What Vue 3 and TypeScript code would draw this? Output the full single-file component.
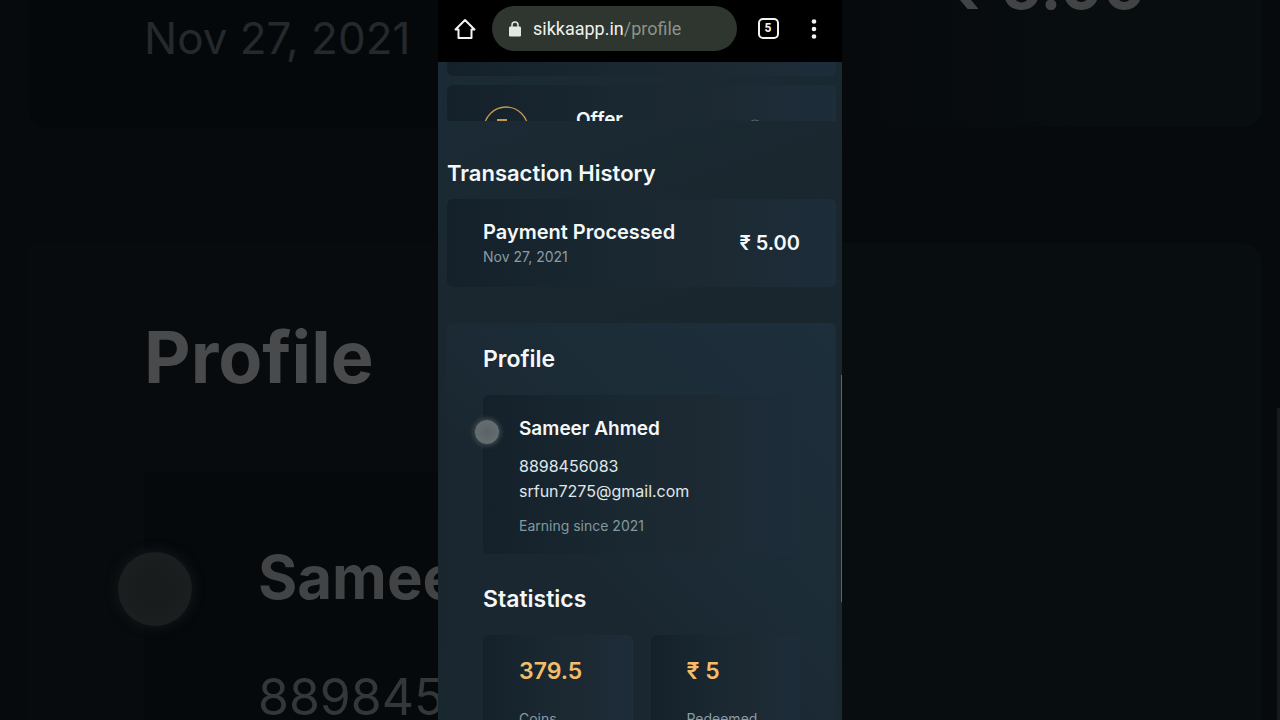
<script setup lang="ts">
interface Transaction {
  title: string
  date: string
  amount: string
}

interface Stat {
  value: string
  label: string
}

const transaction: Transaction = { title: 'Payment Processed', date: 'Nov 27, 2021', amount: '₹ 5.00' }

const user = {
  name: 'Sameer Ahmed',
  phone: '8898456083',
  email: 'srfun7275@gmail.com',
  since: 'Earning since 2021',
}

const stats: Stat[] = [
  { value: '379.5', label: 'Coins' },
  { value: '₹ 5', label: 'Redeemed' },
]
</script>

<template>
  <div class="stage">
    <div class="backdrop backdrop-left" aria-hidden="true">
      <div class="ghost ghost-history">
        <p class="ghost-date">{{ transaction.date }}</p>
      </div>
      <div class="ghost ghost-profile">
        <p class="ghost-title">Profile</p>
        <div class="ghost-user">
          <p class="ghost-name">{{ user.name.slice(0, 5) }}</p>
          <p class="ghost-phone">{{ user.phone.slice(0, 6) }}</p>
          <span class="ghost-touch"></span>
        </div>
      </div>
    </div>

    <div class="phone">
      <header class="browser-bar">
        <button class="icon-button" type="button" aria-label="Home">
          <svg width="22" height="22" viewBox="0 0 22 22" fill="none" stroke="#f1f4f1" stroke-width="2" stroke-linejoin="round">
            <path d="M1.500 11.500 11 2l9.500 9.500H17.500V20h-13v-8.500z" />
          </svg>
        </button>
        <a class="address" href="#profile">
          <svg width="12" height="16" viewBox="0 0 12 16">
            <path d="M3 6V4a3 3 0 0 1 6 0v2" fill="none" stroke="#e3e9e2" stroke-width="1.500" />
            <rect x="0" y="5.500" width="12" height="10" rx="1.300" fill="#e3e9e2" />
          </svg>
          <span class="url">sikkaapp.in<span class="path">/profile</span></span>
        </a>
        <button class="icon-button tabs" type="button" aria-label="Open tabs"><span class="tab-count">5</span></button>
        <button class="icon-button" type="button" aria-label="Menu">
          <svg width="6" height="22" viewBox="0 0 6 22" fill="#f1f4f1">
            <circle cx="3" cy="3.500" r="2.300" />
            <circle cx="3" cy="11" r="2.300" />
            <circle cx="3" cy="18.500" r="2.300" />
          </svg>
        </button>
      </header>

      <main class="page">
        <section class="offers">
          <div class="card offer-previous"></div>
          <div class="card offer">
            <svg class="coin" width="46" height="46" viewBox="0 0 46 46" fill="none" stroke="#c49a4b" stroke-width="1.300">
              <circle cx="23" cy="23" r="22" />
              <path d="M14 14h10M14 19h10" stroke-width="2" />
            </svg>
            <h3>Offer</h3>
            <svg class="more" width="18" height="18" viewBox="0 0 18 18" fill="none" stroke="#56646e">
              <circle cx="9" cy="9" r="8" />
              <path d="m7 5 4 4-4 4" />
            </svg>
          </div>
        </section>

        <section class="history">
          <h2>Transaction History</h2>
          <div class="card transaction">
            <div class="details">
              <h3>{{ transaction.title }}</h3>
              <p class="muted">{{ transaction.date }}</p>
            </div>
            <strong class="amount">{{ transaction.amount }}</strong>
          </div>
        </section>

        <section class="profile">
          <h2>Profile</h2>
          <div class="card user">
            <h3>{{ user.name }}</h3>
            <p>{{ user.phone }}</p>
            <p>{{ user.email }}</p>
            <p class="muted since">{{ user.since }}</p>
            <span class="touch"></span>
          </div>
          <h2 class="stats-title">Statistics</h2>
          <div class="stats">
            <div v-for="stat in stats" :key="stat.label" class="card stat">
              <strong>{{ stat.value }}</strong>
              <p class="muted">{{ stat.label }}</p>
            </div>
          </div>
        </section>
      </main>
      <span class="scrollbar"></span>
    </div>

    <div class="backdrop backdrop-right" aria-hidden="true">
      <div class="ghost ghost-history">
        <p class="ghost-amount">{{ transaction.amount }}</p>
      </div>
      <div class="ghost ghost-profile"></div>
      <span class="ghost-scrollbar"></span>
    </div>
  </div>
</template>

<style>
body {
  margin: 0;
  background: #05090c;
}
</style>

<style scoped>
.stage {
  display: grid;
  grid-template-columns: minmax(0, 1fr) minmax(0, 404px) minmax(0, 1fr);
  height: 100vh;
  overflow: hidden;
  font-family: Inter, "Noto Sans", sans-serif;
  color: #f4f8f8;
}

h2,
h3,
p {
  margin: 0;
}

/* Dimmed enlargement behind the phone */
.backdrop {
  position: relative;
  display: flex;
  flex-direction: column;
  gap: 116px;
  overflow: hidden;
  white-space: nowrap;
  background: #060a0d;
}

.backdrop-left {
  padding-left: 28px;
}

.backdrop-right {
  padding-right: 18px;
}

.ghost-history {
  flex: none;
  height: 127px;
}

.ghost-profile {
  flex: 1;
}

.backdrop-left .ghost {
  padding-left: 116px;
}

.backdrop-left .ghost-history {
  background: #04080b;
  border-radius: 0 0 0 20px;
}

.backdrop-left .ghost-profile {
  background: #070b0e;
}

.backdrop-right .ghost-history {
  display: flex;
  justify-content: flex-end;
  padding-right: 116px;
  background: linear-gradient(90deg, #060a0c, #080d10 60%);
  border-radius: 0 0 20px 0;
}

.backdrop-right .ghost-profile {
  background: #080d10;
  border-radius: 0 20px 0 0;
}

.ghost-date {
  padding-top: 8px;
  font-size: 44px;
  line-height: 60px;
  color: #25292b;
}

.ghost-title {
  padding-top: 74px;
  font-size: 72px;
  font-weight: 700;
  line-height: 80px;
  color: #484a4b;
}

.ghost-user {
  position: relative;
  margin-top: 76px;
  padding: 64px 0 0 114px;
  height: 300px;
  background: #05090c;
}

.ghost-name {
  font-size: 60px;
  font-weight: 700;
  line-height: 80px;
  color: #414344;
}

.ghost-phone {
  padding-top: 50px;
  font-size: 50px;
  line-height: 60px;
  color: #343738;
}

.ghost-touch {
  position: absolute;
  top: 79px;
  left: -26px;
  width: 74px;
  height: 74px;
  border-radius: 50%;
  background: radial-gradient(#171b1b, #1c2020);
  box-shadow: 0 0 10px 3px #101417;
}

.ghost-amount {
  margin-top: -54px;
  font-size: 64px;
  font-weight: 700;
  line-height: 80px;
  color: #414344;
}

.ghost-scrollbar {
  position: absolute;
  top: 408px;
  right: 0;
  bottom: 0;
  width: 3px;
  background: #161a19;
}

/* Phone */
.phone {
  position: relative;
  display: flex;
  flex-direction: column;
  min-height: 0;
  overflow: hidden;
  background: #1a2830;
}

.browser-bar {
  display: flex;
  flex: none;
  align-items: center;
  box-sizing: border-box;
  height: 62px;
  padding: 0 9px 5px 8px;
  background: #000;
}

.icon-button {
  display: flex;
  align-items: center;
  justify-content: center;
  width: 38px;
  height: 38px;
  padding: 0;
  border: 0;
  background: none;
  color: #f1f4f1;
}

.address {
  display: flex;
  flex: 1;
  align-items: center;
  gap: 12px;
  height: 45px;
  margin: 0 12px 0 8px;
  padding-left: 17px;
  border-radius: 23px;
  background: #2e362f;
  text-decoration: none;
}

.url {
  font-family: Roboto, sans-serif;
  font-size: 18px;
  line-height: 24px;
  color: #eef2ee;
}

.path {
  color: #8b938c;
}

.tabs {
  margin-right: 8px;
}

.tab-count {
  box-sizing: border-box;
  width: 21px;
  height: 21px;
  border: 2px solid #f1f4f1;
  border-radius: 5px;
  font-family: Roboto, sans-serif;
  font-size: 12px;
  font-weight: 700;
  line-height: 17px;
  text-align: center;
}

.page {
  flex: 1;
  min-height: 0;
  overflow: hidden;
  padding: 0 6px 0 9px;
  background: linear-gradient(160deg, #1b2b36, #1a272f 30%, #19262d 60%, #1a2831);
}

.card {
  border-radius: 6px;
  background: linear-gradient(90deg, #14212a, #1a2831 45%, #1c2932 65%, #1d2d3a);
}

.offers {
  display: flex;
  flex-direction: column;
  gap: 9px;
  height: 59px;
  overflow: hidden;
}

.offer-previous {
  flex: none;
  height: 14px;
  border-radius: 0 0 6px 6px;
}

.offer {
  display: flex;
  flex: none;
  align-items: flex-start;
  box-sizing: border-box;
  height: 88px;
  padding: 21px 72px 0 36px;
}

.offer h3 {
  flex: 1;
  margin-left: 47px;
}

.more {
  margin-top: 13px;
}

h2 {
  font-size: 22px;
  font-weight: 600;
  line-height: 28px;
}

h3 {
  font-size: 19px;
  font-weight: 600;
  line-height: 28px;
}

.history {
  padding-top: 38px;
}

.transaction {
  display: flex;
  align-items: center;
  justify-content: space-between;
  box-sizing: border-box;
  height: 88px;
  margin-top: 12px;
  padding: 0 36px;
}

.details {
  padding-top: 2px;
}

.details h3,
.amount {
  font-size: 20px;
  font-weight: 600;
  line-height: 26px;
}

.muted {
  font-size: 14px;
  line-height: 24px;
  color: #8b9ca6;
}

.profile {
  margin-top: 36px;
  padding: 22px 36px 36px;
  border-radius: 6px;
  background: linear-gradient(225deg, #1e2f3c, #1c2d38 30%, #1a2730 60%, #1a2730);
}

.profile h2 {
  font-size: 23px;
}

.user {
  position: relative;
  margin-top: 22px;
  padding: 20px 36px 16px;
}

.user h3 {
  margin-bottom: 11px;
}

.user p {
  font-size: 16px;
  line-height: 25px;
  color: #e0e7e9;
}

.user .since {
  margin-top: 9px;
  font-size: 14px;
  color: #82999f;
}

.touch {
  position: absolute;
  top: 25px;
  left: -8px;
  width: 24px;
  height: 24px;
  border-radius: 50%;
  background: radial-gradient(#5c6366, #6b7275);
  box-shadow: 0 0 4px 2px #3c474e;
}

.stats-title {
  margin-top: 31px;
}

.stats {
  display: grid;
  grid-template-columns: 1fr 1fr;
  gap: 18px;
  margin-top: 22px;
}

.stat {
  padding: 20px 36px;
}

.stat strong {
  display: block;
  font-size: 23px;
  font-weight: 600;
  line-height: 32px;
  color: #f5bd69;
}

.stat .muted {
  margin-top: 20px;
}

.scrollbar {
  position: absolute;
  top: 375px;
  right: 0;
  width: 1px;
  height: 227px;
  background: #5d676b;
}
</style>
